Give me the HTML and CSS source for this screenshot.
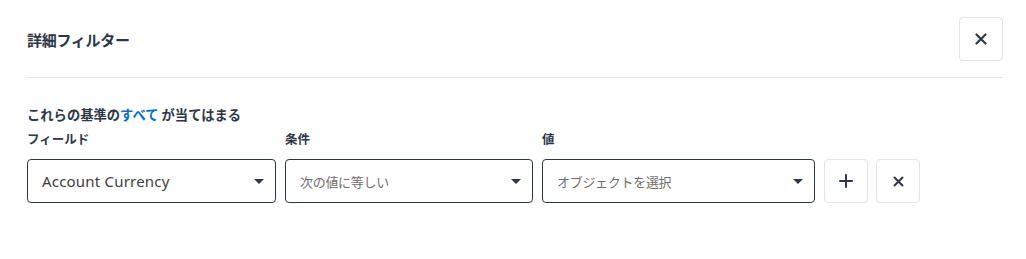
FILE: index.html
```html
<!DOCTYPE html>
<html lang="ja">
<head>
<meta charset="utf-8">
<link rel="stylesheet" href="styles.css">
</head>
<body>
<div class="panel">
  <div class="header">
    <h1 class="title">詳細フィルター</h1>
    <button class="icon-btn close-btn" aria-label="閉じる">
      <svg width="12" height="12" viewBox="0 0 12 12"><path d="M1.5 1.5L10.5 10.5M10.5 1.5L1.5 10.5" stroke="#2d3748" stroke-width="2.2" stroke-linecap="round"/></svg>
    </button>
  </div>
  <div class="body">
    <div class="match">これらの基準の<span class="all">すべて</span> が当てはまる</div>
    <div class="row">
      <div class="col col-field">
        <div class="label">フィールド</div>
        <div class="select"><span class="value">Account Currency</span><span class="caret"></span></div>
      </div>
      <div class="col col-op">
        <div class="label">条件</div>
        <div class="select"><span class="value jp">次の値に等しい</span><span class="caret"></span></div>
      </div>
      <div class="col col-val">
        <div class="label">値</div>
        <div class="select"><span class="value jp">オブジェクトを選択</span><span class="caret"></span></div>
      </div>
      <button class="icon-btn" aria-label="追加">
        <svg width="14" height="14" viewBox="0 0 14 14"><path d="M7 1V13M1 7H13" stroke="#2d3748" stroke-width="2" stroke-linecap="round"/></svg>
      </button>
      <button class="icon-btn" aria-label="削除">
        <svg width="11" height="11" viewBox="0 0 11 11"><path d="M1.5 1.5L9.5 9.5M9.5 1.5L1.5 9.5" stroke="#2d3748" stroke-width="2" stroke-linecap="round"/></svg>
      </button>
    </div>
  </div>
</div>
</body>
</html>
```
FILE: styles.css
```css
* { box-sizing: border-box; }
html, body { margin: 0; padding: 0; background: #ffffff; }
body {
  font-family: "Noto Sans", "Noto Sans CJK JP", sans-serif;
  color: #2d3748;
}
.panel {
  width: 1026px;
  height: 259px;
  padding: 17px 23px 0 27px;
}
.header {
  display: flex;
  align-items: center;
  justify-content: space-between;
  height: 44px;
  margin-bottom: 16px;
}
.title {
  margin: 0;
  font-size: 15px;
  font-weight: 700;
  color: #2d3748;
  font-family: "Noto Sans CJK JP", sans-serif;
  letter-spacing: -0.3px;
}
.header + .body {
  border-top: 1px solid #e5e5e5;
}
.body {
  padding-top: 28px;
}
.match {
  font-family: "Noto Sans CJK JP", sans-serif;
  font-size: 13.3px;
  font-weight: 700;
  line-height: 18px;
  color: #2d3748;
}
.all { color: #0070d2; }
.row {
  display: flex;
  align-items: flex-end;
  gap: 9px;
  margin-top: 6px;
}
.col { display: flex; flex-direction: column; }
.col-field { width: 249px; }
.col-op { width: 248px; }
.col-val { width: 273px; }
.label {
  font-family: "Noto Sans CJK JP", sans-serif;
  font-size: 12.5px;
  font-weight: 700;
  line-height: 18px;
  margin-bottom: 11px;
  color: #2d3748;
}
.select {
  height: 44px;
  border: 1px solid #2d3748;
  border-radius: 4px;
  display: flex;
  align-items: center;
  justify-content: space-between;
  padding: 0 11px 0 14px;
}
.value {
  font-size: 15px;
  letter-spacing: 0.2px;
  color: #3e3e3c;
}
.value.jp {
  font-family: "Noto Sans CJK JP", sans-serif;
  font-size: 13px;
  letter-spacing: -0.3px;
  color: #706e6b;
}
.caret {
  width: 0;
  height: 0;
  border-left: 5px solid transparent;
  border-right: 5px solid transparent;
  border-top: 5px solid #2d3748;
}
.icon-btn {
  width: 44px;
  height: 44px;
  border: 1px solid #e5e5e5;
  border-radius: 4px;
  background: #ffffff;
  display: flex;
  align-items: center;
  justify-content: center;
  padding: 0;
  flex: none;
}
.row .icon-btn + .icon-btn { margin-left: -1px; }
```
